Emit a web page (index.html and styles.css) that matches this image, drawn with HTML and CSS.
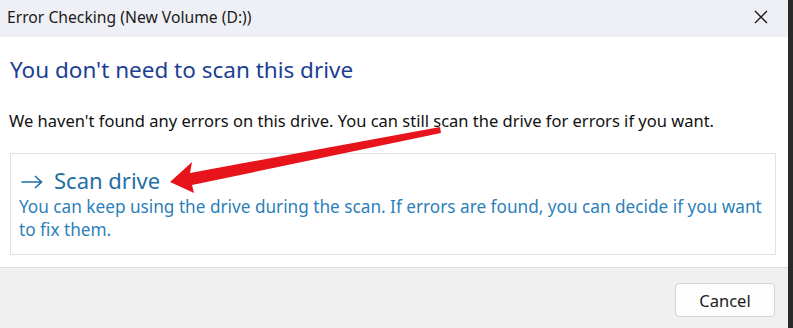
FILE: index.html
```html
<!DOCTYPE html>
<html>
<head>
<meta charset="utf-8">
<link rel="stylesheet" href="styles.css">
</head>
<body>
<div class="window">
  <div class="titlebar">
    <span class="title">Error Checking (New Volume (D:))</span>
    <svg class="close" width="14" height="14" viewBox="0 0 14 14"><path d="M1 1L13 13M13 1L1 13" stroke="#1a1a1a" stroke-width="1.4" fill="none"/></svg>
  </div>
  <div class="content">
    <h1 class="heading">You don't need to scan this drive</h1>
    <p class="body">We haven't found any errors on this drive. You can still scan the drive for errors if you want.</p>
    <div class="option">
      <div class="option-title"><svg class="arrow-icon" width="22" height="14" viewBox="0 0 22 14"><path d="M0.5 7H20.5M14 1L20.5 7L14 13" stroke="#1f6fa6" stroke-width="1.6" fill="none" stroke-linejoin="miter"/></svg><span>Scan drive</span></div>
      <div class="option-desc">You can keep using the drive during the scan. If errors are found, you can decide if you want to fix them.</div>
    </div>
  </div>
  <div class="footer">
    <button class="cancel">Cancel</button>
  </div>
  <svg class="annotation" width="793" height="328" viewBox="0 0 793 328">
    <path d="M170 182 L192 162 L190 173 L440 127 L441 133 L192 185 L194 193 Z" fill="#e8141c"/>
  </svg>
</div>
</body>
</html>
```
FILE: styles.css
```css
html, body {
  margin: 0;
  padding: 0;
}
body {
  background: #2a2a2a;
  width: 793px;
  height: 328px;
  overflow: hidden;
  font-family: "Noto Sans", "Open Sans", sans-serif;
}
.window {
  position: relative;
  width: 788px;
  height: 328px;
  background: #fff;
  display: flex;
  flex-direction: column;
}
.titlebar {
  height: 37px;
  background: #eef0f5;
  display: flex;
  align-items: center;
  justify-content: space-between;
  padding: 0 20px 0 7px;
  box-sizing: border-box;
  flex: none;
}
.title {
  font-size: 15.7px;
  color: #1b1b1b;
  margin-top: -4px;
}
.close {
  margin-top: -4px;
}
.content {
  height: 231px;
  padding: 0 12px 0 10px;
  box-sizing: border-box;
  border-bottom: 1px solid #dedede;
  flex: none;
}
.heading {
  margin: 18px 0 0 0;
  font-size: 22.5px;
  font-weight: 400;
  color: #1c3f94;
  line-height: 30px;
}
.body {
  margin: 25px 0 0 -1px;
  font-size: 16.5px;
  color: #111;
  line-height: 22px;
}
.option {
  margin-top: 21px;
  border: 1px solid #d8e4ea;
  padding: 11px 8px 0 8px;
  height: 102px;
  box-sizing: border-box;
}
.option-title {
  font-size: 22px;
  color: #1f6fa6;
  line-height: 30px;
  display: flex;
  align-items: center;
  gap: 11px;
}
.arrow-icon {
  margin-left: 2px;
  margin-top: 3px;
}
.option-desc {
  font-size: 17.2px;
  color: #2c7fba;
  line-height: 23px;
  margin-top: 0;
}
.footer {
  flex: 1;
  background: #f0f0f0;
  display: flex;
  justify-content: flex-end;
  align-items: flex-start;
  padding: 15px 13px 0 0;
}
.cancel {
  width: 100px;
  height: 34px;
  background: #fdfdfd;
  border: 1px solid #d3d3d3;
  border-radius: 4px;
  font-family: "Noto Sans", "Open Sans", sans-serif;
  font-size: 16.5px;
  color: #1b1b1b;
  padding: 0;
}
.annotation {
  position: absolute;
  left: 0;
  top: 0;
  pointer-events: none;
}
```
